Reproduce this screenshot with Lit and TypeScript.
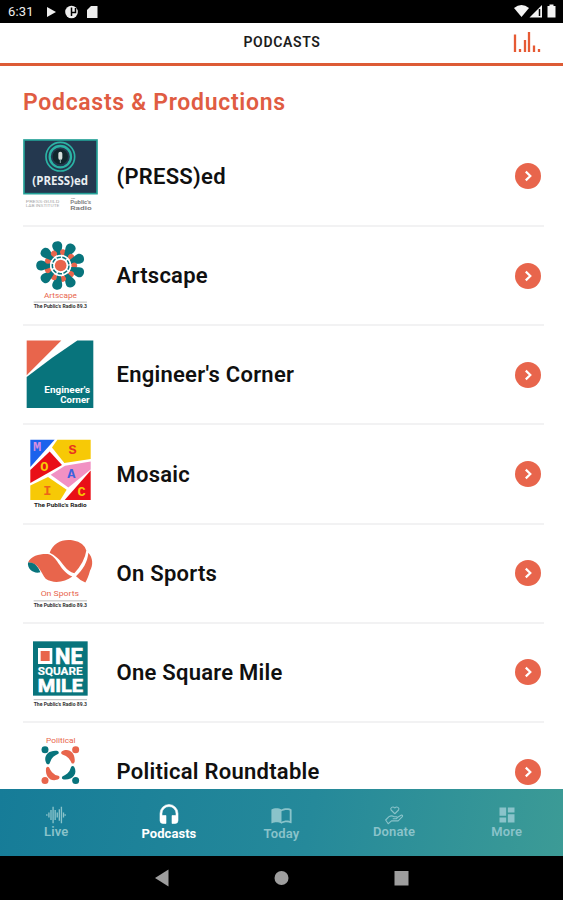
import { LitElement, html, css, svg, TemplateResult } from "lit";
import { customElement, property } from "lit/decorators.js";

const TEAL = "#08747c";
const CORAL = "#e8654c";

const petals = Array.from({ length: 9 }, (_, i) => i * 40 - 10);

const caption = (y: number, x = 71, w = 160) => svg`
  <path d="M${x} ${y - 18}h${w}" stroke="#999" stroke-width="2"/>
  <text x=${x} y=${y} font-size="15" font-weight="700" fill="#333" textLength=${w} lengthAdjust="spacingAndGlyphs">The Public's Radio 89.3</text>`;

const person = (angle: number, color: string) => svg`
  <g transform="rotate(${angle} 151 121)" fill=${color}>
    <circle cx="105" cy="75" r="10.5"/>
    <path d="M110 117C97 95 115 75 141 78Q149 80 145 87Q136 91 130 96Q122 103 119 115Q116 121 110 117Z"/>
  </g>`;

interface Show {
  name: string;
  top: number;
  art: TemplateResult;
}

const shows: Show[] = [
  {
    name: "(PRESS)ed",
    top: -9,
    art: svg`
      <rect x="42" y="30" width="219" height="161" fill="#24384f" stroke="#23a097" stroke-width="5"/>
      <g fill="none" stroke="#2bb3a5">
        <circle cx="151" cy="80" r="43" stroke-width="5"/>
        <circle cx="151" cy="80" r="32" stroke-width="7"/>
      </g>
      <circle cx="151" cy="80" r="23" fill="#10262c"/>
      <rect x="145" y="65" width="12" height="25" rx="6" fill="#d5dedc"/>
      <path d="M151 87v12" stroke="#8aa" stroke-width="3"/>
      <text x="67" y="166" font-family="Open Sans, sans-serif" font-size="35" font-weight="700" fill="#e9eef2" textLength="167" lengthAdjust="spacingAndGlyphs">(PRESS)ed</text>
      <g font-size="12" fill="#a9a9a9">
        <text x="47" y="219" textLength="101" lengthAdjust="spacingAndGlyphs">PRESS·GUILD</text>
        <text x="47" y="232" textLength="101" lengthAdjust="spacingAndGlyphs">LAB INSTITUTE</text>
      </g>
      <g font-size="14" font-weight="700" fill="#858585">
        <text x="183" y="208" font-size="7">The</text>
        <text x="181" y="223" textLength="62" lengthAdjust="spacingAndGlyphs">Public's</text>
        <text x="181" y="240" textLength="64" lengthAdjust="spacingAndGlyphs">Radio</text>
      </g>`,
  },
  {
    name: "Artscape",
    top: -11.4,
    art: svg`
      ${petals.map(a => svg`<g transform="rotate(${a} 152 107)">
        <path d="M146 77L138 53C130 27 174 27 166 53L158 77Z" fill=${TEAL}/>
        <circle cx="166" cy="69" r="9" fill=${CORAL}/>
      </g>`)}
      <circle cx="152" cy="107" r="32" fill="#fff"/>
      <circle cx="152" cy="107" r="25" fill="none" stroke=${TEAL} stroke-width="4.500" stroke-dasharray="13 4.450"/>
      <circle cx="152" cy="107" r="17.500" fill=${CORAL}/>
      <text x="102" y="204" font-size="22" fill=${CORAL} textLength="99" lengthAdjust="spacingAndGlyphs">Artscape</text>
      ${caption(235)}`,
  },
  {
    name: "Engineer's Corner",
    top: -13.8,
    art: svg`
      <path d="M50 33H154L50 137Z" fill=${CORAL}/>
      <path d="M202 33H250V235H50V142Q126 83 202 33Z" fill=${TEAL}/>
      <g font-size="27" font-weight="700" fill="#fff">
        <text x="103" y="190" textLength="137" lengthAdjust="spacingAndGlyphs">Engineer's</text>
        <text x="151" y="219" textLength="88" lengthAdjust="spacingAndGlyphs">Corner</text>
      </g>`,
  },
  {
    name: "Mosaic",
    top: -16.2,
    art: svg`
      <path d="M61 31H134L61 113Z" fill="#1c62ec"/>
      <path d="M142 31H242V89L163 101L126 54Z" fill="#f7c906"/>
      <path d="M119 66L156 107L61 161V122Z" fill="#e90f17"/>
      <path d="M242 96V120L175 174L122 136L165 109Z" fill="#f191c3"/>
      <path d="M242 123V212H164Z" fill="#e90f17"/>
      <path d="M61 168L114 143L170 181L151 212H61Z" fill="#f7c906"/>
      <g font-family="Liberation Mono, monospace" font-size="41" font-weight="700" text-anchor="middle">
        <text x="81" y="66" fill="#d78ee0">M</text>
        <text x="188" y="74" fill="#e8331f">S</text>
        <text x="103" y="124" fill="#f7c906">O</text>
        <text x="184" y="145" fill="#3b62df">A</text>
        <text x="112" y="197" fill="#ed6517">I</text>
        <text x="215" y="199" fill="#f7c906">C</text>
      </g>
      <text x="72" y="233" font-size="18" font-weight="700" fill="#222" textLength="158" lengthAdjust="spacingAndGlyphs">The Public's Radio</text>`,
  },
  {
    name: "On Sports",
    top: -18.6,
    art: svg`
      <path d="M119 68C130 38 158 25 190 31Q222 37 229 61Q224 96 193 129C169 124 158 97 143 84Q132 74 119 68Z" fill=${CORAL}/>
      <path d="M54 97C64 75 94 70 117 72C146 83 149 123 187 139C165 156 131 162 107 146C93 127 84 95 54 97Z" fill=${CORAL}/>
      <path d="M235 68C249 83 250 105 240 122Q234 145 226 157Q211 151 198 138C218 121 233 95 235 68Z" fill=${CORAL}/>
      <path d="M54 97C71 94 84 107 91 126C72 132 51 117 54 97Z" fill=${TEAL}/>
      <text x="92" y="198" font-size="22" fill=${CORAL} textLength="115" lengthAdjust="spacingAndGlyphs">On Sports</text>
      ${caption(230)}`,
  },
  {
    name: "One Square Mile",
    top: -21,
    art: svg`
      <rect x="69" y="34" width="164" height="163" fill=${TEAL}/>
      <rect x="84" y="54" width="43" height="48" fill="#fff"/>
      <rect x="92" y="63" width="27" height="30" fill=${CORAL}/>
      <g font-weight="700" fill="#fff" stroke="#fff" stroke-width="2">
        <text x="135" y="101" font-size="64" textLength="83" lengthAdjust="spacingAndGlyphs">NE</text>
        <text x="83" y="135" font-size="31" stroke-width=".5" textLength="135" lengthAdjust="spacingAndGlyphs">SQUARE</text>
        <text x="83" y="185" font-size="57" textLength="136" lengthAdjust="spacingAndGlyphs">MILE</text>
      </g>
      ${caption(227)}`,
  },
  {
    name: "Political Roundtable",
    top: -8.4,
    art: svg`
      <text x="108" y="54" font-size="22" fill=${CORAL} textLength="89" lengthAdjust="spacingAndGlyphs">Political</text>
      ${person(0, TEAL)}${person(90, CORAL)}${person(180, TEAL)}${person(270, CORAL)}`,
  },
];

const tabs = [
  {
    label: "Live",
    icon: svg`<path d="M1 11v2M3.500 9v6M6 6v12M8.500 2v20M11 6v12M13.500 9v6M16 5v14M18.500 2v20M21 9v6M23 11v2" stroke="currentColor" stroke-width="1.600" fill="none"/>`,
  },
  {
    label: "Podcasts",
    icon: svg`<path d="M12 1a9 9 0 0 0-9 9v7a3 3 0 0 0 3 3h3v-8H5v-2a7 7 0 0 1 14 0v2h-4v8h3a3 3 0 0 0 3-3v-7a9 9 0 0 0-9-9z" transform="translate(0 1.500)" fill="currentColor" stroke="currentColor" stroke-width=".6"/>`,
  },
  {
    label: "Today",
    icon: svg`<path d="M21 5c-1.110-.35-2.330-.5-3.500-.5-1.950 0-4.050.4-5.500 1.500-1.450-1.100-3.550-1.500-5.500-1.500S2.450 4.900 1 6v14.650c0 .25.25.5.5.5.1 0 .15-.05.25-.05C3.100 20.450 5.050 20 6.500 20c1.950 0 4.050.4 5.500 1.500 1.350-.85 3.800-1.500 5.500-1.500 1.650 0 3.350.3 4.750 1.050.1.050.15.050.25.050.25 0 .5-.25.5-.5V6c-.6-.45-1.250-.75-2-1zm0 13.500c-1.100-.35-2.300-.5-3.500-.5-1.700 0-4.150.65-5.500 1.500V8c1.350-.85 3.800-1.500 5.500-1.500 1.200 0 2.400.15 3.500.5v11.500z" fill="currentColor"/>`,
  },
  {
    label: "Donate",
    icon: svg`<g fill="none" stroke="currentColor" stroke-width="1.300" stroke-linejoin="round" stroke-linecap="round"><path d="M13 10.500L8.500 6C7 3.500 10.500.8 13 3.600 15.500.8 19 3.500 17.500 6z"/><path d="M2 18l4-4q3-2 6 0h3q2 1 0 2.500h-4M16 15l5-3q2 0 1 2l-5 5H9l-4 3.500L2 18"/></g>`,
  },
  {
    label: "More",
    icon: svg`<path d="M3 13h8V3H3v10zm0 8h8v-6H3v6zm10 0h8V11h-8v10zm0-18v6h8V3h-8z" fill="currentColor"/>`,
  },
];

@customElement("podcast-row")
class PodcastRow extends LitElement {
  @property({ attribute: false }) show!: Show;

  static styles = css`
    :host {
      display: flex;
      align-items: center;
      box-sizing: border-box;
      height: 99.2px;
      flex: none;
      border-bottom: 2px solid #f2f2f3;
    }
    .art {
      width: 75px;
      height: 99.2px;
      flex: none;
      margin-right: 18.500px;
      font-family: Roboto, sans-serif;
    }
    .name {
      flex: 1;
      padding-top: 1px;
      font: 600 22px/28px Roboto, sans-serif;
      letter-spacing: 0.26px;
      color: #101010;
      white-space: nowrap;
    }
    .go {
      width: 26px;
      height: 26px;
      margin: 0 3px 0 0;
    }
  `;

  render() {
    return html`
      <svg class="art" viewBox="39 ${this.show.top} 225 297.6">${this.show.art}</svg>
      <span class="name">${this.show.name}</span>
      <svg class="go" viewBox="0 0 26 26">
        <circle cx="13" cy="13" r="13" fill="#e8654c" />
        <path d="M10.800 8.600L15.300 13L10.800 17.400" fill="none" stroke="#fff" stroke-width="2.200" />
      </svg>
    `;
  }
}

@customElement("app-root")
class AppRoot extends LitElement {
  static styles = css`
    :host {
      display: flex;
      flex-direction: column;
      height: 900px;
      overflow: hidden;
      background: #fff;
      font-family: Roboto, sans-serif;
    }
    .status {
      height: 23px;
      flex: none;
      background: #000;
      display: flex;
      align-items: center;
      justify-content: space-between;
      color: #eee;
    }
    .clock {
      font-size: 13px;
      line-height: 24px;
      padding-left: 8px;
      width: 36px;
      letter-spacing: 0.2px;
    }
    .left {
      display: flex;
      align-items: center;
    }
    .bar {
      height: 43px;
      flex: none;
      box-sizing: border-box;
      border-bottom: 3px solid #dd5b35;
      display: grid;
      grid-template-columns: 1fr auto 1fr;
      align-items: center;
    }
    .title {
      grid-column: 2;
      font-size: 14px;
      font-weight: 600;
      line-height: 16px;
      padding: 0 0 2px 1px;
      letter-spacing: 0.65px;
      color: #1c1c1c;
    }
    .levels {
      justify-self: end;
      margin: 0 21px 2px 0;
      width: 30px;
      height: 22px;
    }
    .content {
      flex: 1;
      min-height: 0;
      overflow: hidden;
      display: flex;
      flex-direction: column;
      padding: 0 19px 0 23px;
    }
    .heading {
      height: 61.900px;
      flex: none;
      margin: 0;
      padding-top: 22px;
      box-sizing: border-box;
      font-size: 23px;
      font-weight: 600;
      line-height: 29px;
      letter-spacing: 0.69px;
      color: #e05c42;
    }
    .tabs {
      height: 67px;
      flex: none;
      display: grid;
      grid-template-columns: repeat(5, 1fr);
      background: linear-gradient(100deg, #167c98, #25899a 55%, #3c9b96);
    }
    .tab {
      display: flex;
      flex-direction: column;
      align-items: center;
      padding-top: 16px;
      font-size: 13px;
      line-height: 14px;
      font-weight: 600;
      letter-spacing: 0.15px;
      color: #8ac3ca;
    }
    .tab svg {
      width: 20px;
      height: 20px;
    }
    .tab.wide svg {
      width: 23px;
      height: 22px;
    }
    .tab.wide {
      padding-top: 15px;
    }
    .tab.wide span {
      padding-top: 1px;
    }
    .tab.active {
      padding-top: 13px;
      color: #fff;
      font-weight: 700;
      letter-spacing: 0.05px;
    }
    .tab.active svg {
      width: 24px;
      height: 24px;
      margin-bottom: 1px;
    }
    .system {
      height: 44px;
      flex: none;
      background: #000;
    }
  `;

  render() {
    return html`
      <div class="status">
        <div class="left">
          <span class="clock">6:31</span>
          <svg width="60" height="23" viewBox="44 0 60 23" fill="#eee">
            <path d="M47 7l9 5-9 5z" />
            <circle cx="71.500" cy="12" r="6.300" />
            <path d="M71.500 7.500v8.500M71.500 12.500h4v-4.500" stroke="#000" stroke-width="1.500" fill="none" />
            <path d="M91 6h6.500v12H87v-8z" />
          </svg>
        </div>
        <svg width="50" height="23" viewBox="513 0 50 23" fill="#f4f4f4">
          <path d="M514 8q7.500-6 15 0l-7.500 9z" />
          <path d="M542 5v12.500h-12.500z" />
          <path d="M539.500 9v7" stroke="#000" stroke-width="1.500" />
          <path d="M547.500 6h2V4.500h4V6h2v11.500h-8z" />
        </svg>
      </div>
      <div class="bar">
        <span class="title">PODCASTS</span>
        <svg class="levels" viewBox="512 31 30 22">
          <path d="M515 34.500v17.500M520 49v3M525 40v12M529 32v20M534 45.500v6.500M539 49v3" stroke="#e65a34" stroke-width="2.300" />
        </svg>
      </div>
      <div class="content">
        <h1 class="heading">Podcasts &amp; Productions</h1>
        ${shows.map(s => html`<podcast-row .show=${s}></podcast-row>`)}
      </div>
      <div class="tabs">
        ${tabs.map(
          (t, i) => html`<div class="tab ${i === 1 ? "active" : i === 2 ? "wide" : ""}">
            <svg viewBox="0 0 24 24">${t.icon}</svg>
            <span>${t.label}</span>
          </div>`
        )}
      </div>
      <svg class="system" width="563" height="44" viewBox="0 856 563 44" fill="#9e9e9e">
        <path d="M155 878l13.500-8.500v17z" />
        <circle cx="281.500" cy="878" r="7" />
        <rect x="394.500" y="871" width="14" height="14.500" />
      </svg>
    `;
  }
}
